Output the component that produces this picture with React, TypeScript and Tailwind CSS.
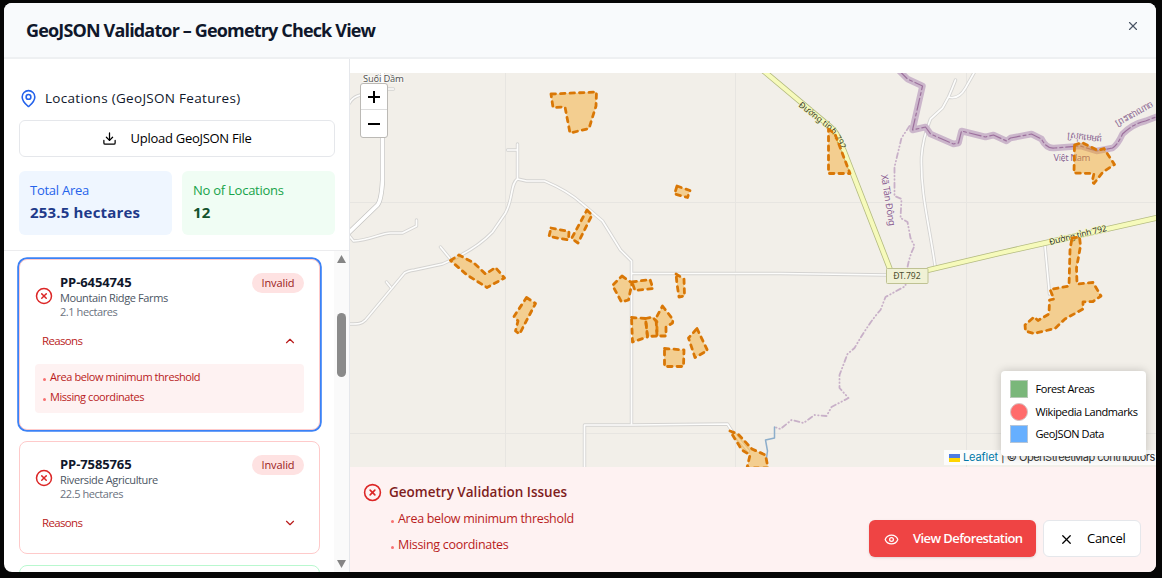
import type { ReactNode } from 'react';
import { ChevronDown, ChevronUp, CircleX, Download, Eye, MapPin, X } from 'lucide-react';

type Parcel = { id: string; name: string; area: string; reasons: string[]; open: boolean };

const parcels: Parcel[] = [
  {
    id: 'PP-6454745',
    name: 'Mountain Ridge Farms',
    area: '2.1 hectares',
    reasons: ['Area below minimum threshold', 'Missing coordinates'],
    open: true,
  },
  { id: 'PP-7585765', name: 'Riverside Agriculture', area: '22.5 hectares', reasons: [], open: false },
];

const plots = [
  '551,94 596.5,92 596,106 589,128.500 570,133 565,107 553,107.500',
  '828.500,129 835,134 850,173.500 828.500,173.500',
  '677,186 690,190.500 687.500,197.500 674.500,194',
  '551,228 569,231.500 568.500,240 549,236.500',
  '587,210 592,215 578,243 571.500,238.500',
  '450.500,260.500 459,255 474,263 485.500,274 495.500,267.500 504.500,278 487,287.500 467,275',
  '526.500,297.500 535.500,303.500 519.500,334 515.500,331 518,321 514,316.500',
  '622,276 632,283 628.500,300 621.500,302 612.500,285.500',
  '632,282 650,279.500 653,288.500 635,290.500',
  '676,274 684,279 684.500,296 679,297 677,284',
  '631.500,317.500 645.500,318.500 647.500,337 632.500,342',
  '645.500,318.500 652.500,317 657,322 657,336 647.500,336.500',
  '662.500,306 673,319.500 672.500,323 666,327 666,336 657,336 656,318',
  '664.500,348.500 684,350 683.500,366.500 664.500,366.500',
  '697,328.500 707.500,350.500 695,357.500 688.500,338',
  '730,431 738,434 752,449 765.500,455 768,468 747,468 750,455 742,450',
  '1074.500,145 1082,142.500 1098,150.500 1104,148.500 1114.500,164.500 1103,172 1094,183.500 1092,182 1094,173.500 1074,173',
  '1072,238 1079.500,237 1080.500,246 1076.500,268 1077,284 1093,282.500 1101,296 1093,301.500 1083,302 1083,309 1065,319 1055,328.500 1034,333.500 1025.500,331 1025,325 1034,317 1038,320.500 1049,314 1049.500,300 1054,299 1050,289.500 1069,286 1070,250',
];

const lanes = [
  'M517,144 V179 M507,150 H517',
  'M349,324 C358,324 361,324 365,320 L404,273 Q407,271 414,270 L442,264 Q475,250 492,232 L505,213 C513,198 510,183 517,179 L526,181 H544 Q568,191 582,204 L602,221 L620,250 L631,261 V424',
  'M632,273.500 H780 L888,275',
  'M584,467 V425 H632 L727,424 Q732,433 748,451',
  'M349,236 L353,241 C370,240 381,233 390,233 H402 L416,226 V220',
  'M440,247 L449,258 M386,282 L390,287',
  'M935,269 C929,225 920,195 921,157 Q922,139 930,119 L942,108 L948,97 L951,90 L955,80 M948,97 Q958,100 965,88 L974,72',
  'M1044.500,246 L1049,294 M349,103 Q352,97 360,95 M387,89 H393',
];
const mainLane = 'M382,73 V180 Q381,200 377,205 L347,234';
const border = 'M898,70 L907,79 L922,86 L912,130 L925,127 L930,134 L953,144 L958,143 L961,131 L985,137 L993,135 L1006,141 L1010,138 L1031,134 L1041,139 Q1046,149 1054,148 L1080,146 L1096,151 L1112,148 Q1117,145 1122,134 Q1132,124 1145,121 L1158,116';
const commune = 'M909,126 L901,138 L894,167 L894,196 L901,199 L900,218 L907,222 L910,238 L914,246 Q906,261 905,286 L885,297 L880,310 Q869,322 854,348 L847,354 L839,375 L839,388 L848,398 L831,407 L826,416 L814,415 L803,423 L791,420 L780,429 L774,427';
const highway = 'M762,70 L830,127 Q836,132 840,142 L889,268 M928,270 L1000,253 L1160,217';

function CountryMap() {
  return (
    <svg className="block h-full w-full" viewBox="350 73 806 394" fill="none">
      <rect x="349" y="73" width="807" height="394" fill="#f2efe9" />
      <path d="M505.500,73 V467 M735.500,73 V467 M966.500,73 V467 M349,202.500 H1156 M349,433.500 H1156" stroke="#e7e5e1" />
      <g strokeLinejoin="round" strokeLinecap="round" transform="translate(0.500 0)">
        {lanes.map((d) => (
          <path key={d} d={d} stroke="#d4d3d1" strokeWidth="3.400" />
        ))}
        {lanes.map((d) => (
          <path key={d} d={d} stroke="#fdfdfc" strokeWidth="1.700" />
        ))}
        <path d={mainLane} stroke="#c5c4c2" strokeWidth="5" />
        <path d={mainLane} stroke="#fff" strokeWidth="3.600" />
        <path d={commune} stroke="#c8b0c8" strokeWidth="1.800" strokeDasharray="5 3 0.500 3 0.500 3" />
        <path d="M774,427 V438 L765,440 L767,451 L766,458" stroke="#8daecb" strokeWidth="1.500" />
        <path d={highway} stroke="#b4bb81" strokeWidth="5.800" />
        <path d={highway} stroke="#f6fabb" strokeWidth="4.200" />
        <path d={border} stroke="#cbb6cb" strokeWidth="6.500" />
        <path d={border} stroke="#9d719d" strokeWidth="1.200" strokeDasharray="12 3 3 3" />
      </g>
      <g fontFamily="'Noto Sans', sans-serif" paintOrder="stroke" strokeLinejoin="round">
        <text x="363" y="81.500" fontSize="9.500" fill="#555" stroke="#f8f7f4" strokeWidth="2" textLength="41">Suối Dầm</text>
        <path id="road-west" d="M798,106 L829,130 Q835,136 843,154" />
        <text fontSize="8.500" fill="#3b3b2c" stroke="#f6fabb" strokeWidth="1"><textPath href="#road-west">Đường tỉnh 792</textPath></text>
        <text transform="translate(1050,245) rotate(-14)" fontSize="8.500" fill="#333" stroke="#f6fabb" strokeWidth="1.500" textLength="59">Đường tỉnh 792</text>
        <text transform="translate(881,175) rotate(81)" fontSize="9.500" fill="#8b5f91" stroke="#f5f2ee" strokeWidth="1.500" textLength="52">Xã Tân Đông</text>
        <text x="1053.500" y="160.500" fontSize="9.500" fill="#8b6793" stroke="#f5f2ee" strokeWidth="1.500" textLength="37">Việt Nam</text>
        <text transform="translate(1066,138) rotate(6)" fontSize="9" fill="#8b6793" textLength="35">ស្រុកមេមត់</text>
        <text transform="translate(1116,127) rotate(-29)" fontSize="9" fill="#8b6793" textLength="42">ព្រះរាជាណាច</text>
      </g>
      <rect x="886.500" y="268.500" width="41.500" height="15" rx="1" fill="#f0f1d5" stroke="#bfc293" />
      <text x="907" y="279.300" fontSize="8.600" textAnchor="middle" fontFamily="'Noto Sans', sans-serif" fill="#4b4e31">ĐT.792</text>
      {plots.map((points) => (
        <polygon key={points} points={points} fill="#f59e0b" fillOpacity="0.400" stroke="#d97706" strokeWidth="2.800" strokeLinecap="round" strokeLinejoin="round" strokeDasharray="4.500 5" />
      ))}
    </svg>
  );
}

function Stat({ label, value, tone }: { label: string; value: string; tone: 'blue' | 'green' }) {
  const blue = tone === 'blue';
  return (
    <div className={`h-16 flex-1 rounded-md pl-[11px] pt-[9px] ${blue ? 'bg-[#eff6ff]' : 'bg-[#f0fdf4]'}`}>
      <div className={`text-[13px] leading-5 tracking-[-0.25px] ${blue ? 'text-[#2563eb]' : 'text-[#16a34a]'}`}>{label}</div>
      <div className={`text-[15px] font-bold leading-6 tracking-[0.18px] ${blue ? 'text-[#1e3a8a]' : 'text-[#14532d]'}`}>{value}</div>
    </div>
  );
}

function Reason({ children }: { children: ReactNode }) {
  return (
    <li className="flex h-5 items-center gap-1">
      <span className="mt-[5px] size-[3px] rounded-full bg-[#f87171]" />
      {children}
    </li>
  );
}

function ParcelCard({ parcel }: { parcel: Parcel }) {
  const Chevron = parcel.open ? ChevronUp : ChevronDown;
  return (
    <article
      className={`w-[301px] shrink-0 rounded-lg border border-[#fecaca] bg-white px-[15px] pt-3 ${
        parcel.open ? 'h-[171px] ring-[1.800px] ring-[#3b82f6]' : 'h-[113px]'
      }`}
    >
      <div className="flex h-12 items-start">
        <CircleX className="mt-[15px] size-[18px] text-[#dc2626]" strokeWidth={2} />
        <div className="ml-[7px] mt-[2px]">
          <h3 className="text-[13px] font-bold leading-4 tracking-[-0.1px] text-slate-900">{parcel.id}</h3>
          <p className="text-[11px] leading-4 tracking-[-0.38px] text-[#4b5563]">{parcel.name}</p>
          <p className="-mt-px text-[11px] leading-[14px] tracking-[-0.43px] text-[#6b7280]">{parcel.area}</p>
        </div>
        <span className="ml-auto mt-px h-5 w-[52px] rounded-full bg-[#fee2e2] text-center text-[11px] font-medium leading-5 tracking-[-0.1px] text-[#991b1b]">Invalid</span>
      </div>
      <div className="mt-[11px] flex h-5 items-center justify-between pl-[7px] pr-[7px] text-[11.500px] tracking-[-0.65px] text-[#b91c1c]">
        Reasons
        <Chevron className="size-3.5" strokeWidth={2} />
      </div>
      {parcel.open && (
        <ul className="mt-[13px] h-[49px] rounded bg-[#fef2f2] pl-2 pt-[3px] text-[11px] tracking-[-0.43px] text-[#b91c1c]">
          {parcel.reasons.map((reason) => (
            <Reason key={reason}>{reason}</Reason>
          ))}
        </ul>
      )}
    </article>
  );
}

function Sidebar() {
  return (
    <aside className="flex w-[345px] flex-col">
      <div className="h-[192px] border-b border-[#ececee] pl-[15px] pr-[14px] pt-[29px]">
        <h2 className="flex h-5 items-center gap-[7px] text-[13.500px] font-medium tracking-[0.3px] text-slate-900">
          <MapPin className="size-[19px] text-[#2563eb]" strokeWidth={2} />
          Locations (GeoJSON Features)
        </h2>
        <button className="mt-[12px] flex h-[37px] w-full items-center justify-center gap-[14px] rounded-md border border-gray-200 pr-px text-[13px] font-medium tracking-[-0.28px] text-black">
          <Download className="size-[15px]" strokeWidth={2} />
          Upload GeoJSON File
        </button>
        <div className="mt-[14px] flex gap-2.5">
          <Stat label="Total Area" value="253.5 hectares" tone="blue" />
          <Stat label="No of Locations" value="12" tone="green" />
        </div>
      </div>
      <div className="flex min-h-0 flex-1">
        <div className="flex flex-1 flex-col gap-[11px] overflow-hidden pl-[15px] pt-2">
          {parcels.map((parcel) => (
            <ParcelCard key={parcel.id} parcel={parcel} />
          ))}
          <article className="h-[120px] w-[301px] shrink-0 rounded-lg border border-green-200 bg-white" />
        </div>
        <div className="flex w-[15px] flex-col items-center bg-[#fafafa] pb-[4px] pt-1">
          <svg className="h-2 w-[9px]" viewBox="0 0 9 8"><path d="M4.500 0L9 8H0Z" fill="#858585" /></svg>
          <div className="mt-[50px] h-16 w-[9px] rounded-full bg-[#8a8a8a]" />
          <svg className="mt-auto h-2 w-[9px]" viewBox="0 0 9 8"><path d="M4.500 8L9 0H0Z" fill="#858585" /></svg>
        </div>
      </div>
    </aside>
  );
}

function Legend() {
  return (
    <div className="absolute bottom-[11px] right-[10px] flex h-[85px] w-[145px] flex-col gap-[4.500px] whitespace-nowrap rounded bg-white pl-[9px] pt-[9px] text-[11px] leading-[18px] tracking-[-0.42px] text-black shadow-[0_0_10px_rgba(0,0,0,0.2)]">
      <div className="flex items-center gap-[7.500px]"><i className="size-[18px] border border-[#b5c9b5] bg-[#7ab77a]" />Forest Areas</div>
      <div className="flex items-center gap-[7.500px]"><i className="size-[18px] rounded-full border border-[#d5c5c5] bg-[#ff6b6b]" />Wikipedia Landmarks</div>
      <div className="flex items-center gap-[7.500px]"><i className="size-[18px] border border-[#b5c5d8] bg-[#66afff]" />GeoJSON Data</div>
    </div>
  );
}

export default function App() {
  return (
    <div className="h-[578px] w-[1162px] overflow-hidden bg-[#060606] pl-1 pt-[3px] font-['Open_Sans','Noto_Sans',sans-serif]">
      <div className="flex h-[569px] w-[1152px] flex-col overflow-hidden rounded-lg bg-white">
        <header className="flex h-14 items-center justify-between border-b-2 border-[#eef0f2] bg-[#f8fafc] pl-[22px] pr-[16px]">
          <h1 className="text-[18px] font-bold tracking-[-0.84px] text-slate-900">GeoJSON Validator – Geometry Check View</h1>
          <X className="-mt-2 size-[14px] text-gray-600" strokeWidth={2} />
        </header>
        <div className="flex min-h-0 flex-1">
          <Sidebar />
          <main className="flex w-[807px] flex-col border-l border-[#e5e7eb] pt-[14px]">
            <div className="relative h-[394px]">
              <CountryMap />
              <div className="absolute left-[10px] top-[10px] w-7 overflow-hidden rounded-[3px] border border-[#bbb9b5] bg-white">
                <button className="flex h-[26px] w-full items-center justify-center border-b border-[#ddd]">
                  <svg className="size-3" viewBox="0 0 12 12"><path d="M0 6H12M6 0V12" stroke="#000" strokeWidth="2" /></svg>
                </button>
                <button className="flex h-[27px] w-full items-center justify-center">
                  <svg className="size-3" viewBox="0 0 12 12"><path d="M0 6H12" stroke="#000" strokeWidth="2" /></svg>
                </button>
              </div>
              <div className="absolute bottom-[2px] right-0 flex h-[15px] w-[212px] items-center gap-[3px] whitespace-nowrap bg-white/80 pl-[5px] font-['Inter','Open_Sans',sans-serif] text-[11px] tracking-[-0.48px] text-[#333]">
                <svg className="h-2 w-[11px] shrink-0" viewBox="0 0 12 8" preserveAspectRatio="none"><path fill="#4c7be1" d="M0 0h12v4H0z" /><path fill="#ffd500" d="M0 4h12v4H0z" /></svg>
                <span className="tracking-[-0.1px] text-[#0078a8]">Leaflet</span>
                <span>| © OpenStreetMap contributors</span>
              </div>
              <Legend />
            </div>
            <footer className="flex h-[106px] justify-between bg-[#fef2f2] pl-[13px] pr-[15px]">
              <div className="pt-[15px]">
                <h2 className="flex h-5 items-center gap-[7px] text-[13.500px] font-semibold text-[#7f1d1d]">
                  <CircleX className="size-[19px] text-[#dc2626]" strokeWidth={2} />
                  Geometry Validation Issues
                </h2>
                <ul className="ml-[28px] mt-[7px] flex flex-col gap-[6px] text-[12.500px] tracking-[-0.3px] text-[#b91c1c]">
                  <Reason>Area below minimum threshold</Reason>
                  <Reason>Missing coordinates</Reason>
                </ul>
              </div>
              <div className="flex gap-[7px] pt-[53px]">
                <button className="flex h-[37px] w-[167px] items-center gap-[14px] rounded-md bg-[#ef4444] pl-[15px] pt-px text-[13px] font-semibold tracking-[-0.58px] text-white shadow-sm">
                  <Eye className="size-[15px]" strokeWidth={2} />
                  View Deforestation
                </button>
                <button className="flex h-[37px] w-[98px] items-center gap-[13px] rounded-md border border-gray-200 bg-white pl-[15px] pt-px text-[13px] font-medium tracking-[-0.3px] text-black">
                  <X className="size-[15px]" strokeWidth={2} />
                  Cancel
                </button>
              </div>
            </footer>
          </main>
        </div>
      </div>
    </div>
  );
}
